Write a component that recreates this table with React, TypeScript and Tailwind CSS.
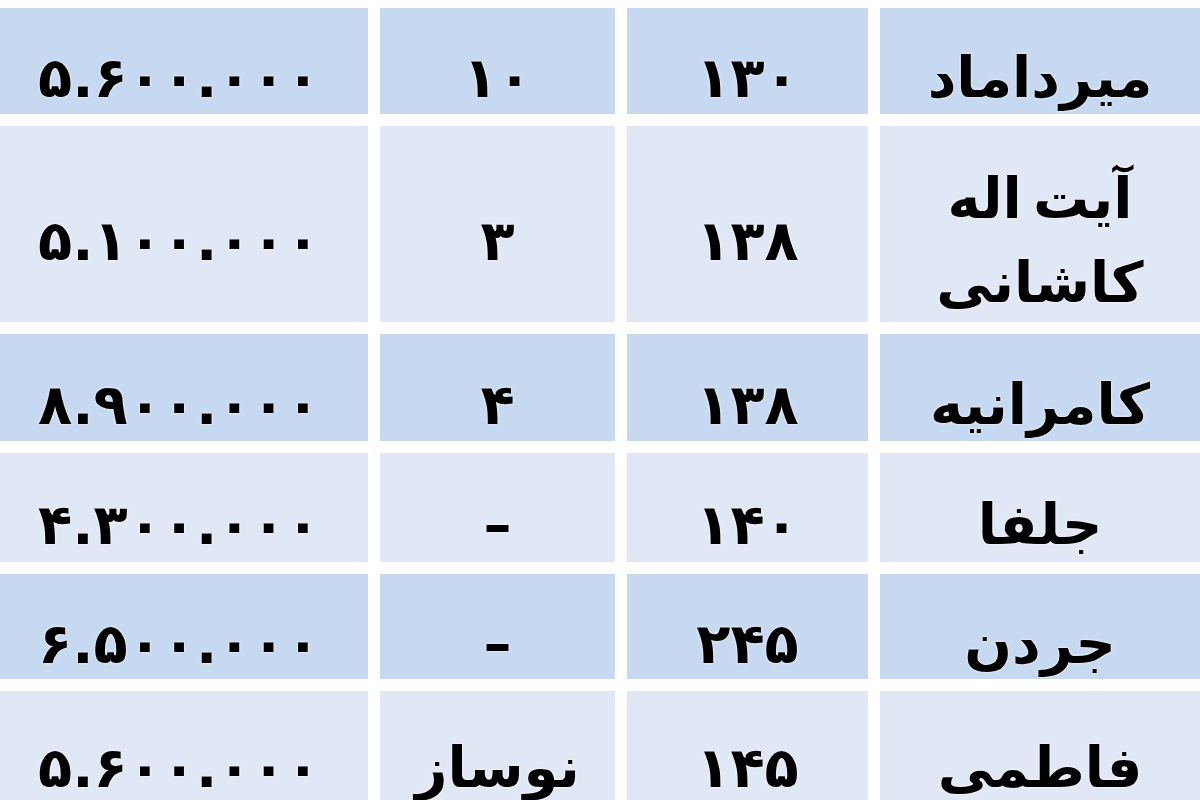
import React from "react";

type Row = { name: string[]; area: string; floor: string; price: string; dark: boolean; h: string };

const rows: Row[] = [
  { name: ["میرداماد"], area: "۱۳۰", floor: "۱۰", price: "۵.۶۰۰.۰۰۰", dark: true, h: "h-[106px]" },
  { name: ["آیت\u2009اله", "کاشانی"], area: "۱۳۸", floor: "۳", price: "۵.۱۰۰.۰۰۰", dark: false, h: "h-[196px]" },
  { name: ["کامرانیه"], area: "۱۳۸", floor: "۴", price: "۸.۹۰۰.۰۰۰", dark: true, h: "h-[107px]" },
  { name: ["جلفا"], area: "۱۴۰", floor: "–", price: "۴.۳۰۰.۰۰۰", dark: false, h: "h-[109px]" },
  { name: ["جردن"], area: "۲۴۵", floor: "–", price: "۶.۵۰۰.۰۰۰", dark: true, h: "h-[105px]" },
  { name: ["فاطمی"], area: "۱۴۵", floor: "نوساز", price: "۵.۶۰۰.۰۰۰", dark: false, h: "h-[120px]" },
];

function Cell({ children, dark, h }: { children: React.ReactNode; dark: boolean; h: string }) {
  return (
    <div
      className={`${h} flex flex-col items-center justify-center pt-[34px] text-black font-bold leading-[84px] text-[56px] [text-shadow:0_0_3px_#ffffff] ${
        dark ? "bg-[#c6d9f1]" : "bg-[#e0e7f5]"
      }`}
    >
      {children}
    </div>
  );
}

export default function App() {
  return (
    <div className="w-[1200px] h-[800px] overflow-hidden bg-white pt-[8px]" style={{ fontFamily: '"DejaVu Sans", sans-serif' }}>
      <div dir="rtl" className="grid grid-cols-[320px_241px_235px_368px] gap-x-[12px] gap-y-[12px]">
        {rows.map((r, i) => (
          <React.Fragment key={i}>
            <Cell dark={r.dark} h={r.h}>
              {r.name.map((n, j) => (
                <span key={j}>{n}</span>
              ))}
            </Cell>
            <Cell dark={r.dark} h={r.h}>
              <span>{r.area}</span>
            </Cell>
            <Cell dark={r.dark} h={r.h}>
              <span>{r.floor}</span>
            </Cell>
            <Cell dark={r.dark} h={r.h}>
              <span className="tracking-[4px] pr-[10px]">{r.price}</span>
            </Cell>
          </React.Fragment>
        ))}
      </div>
    </div>
  );
}
